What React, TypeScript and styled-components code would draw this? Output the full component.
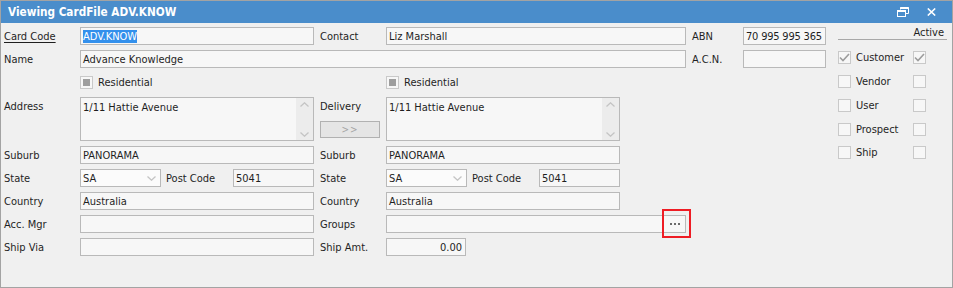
import React from 'react'
import styled, { createGlobalStyle } from 'styled-components'

const GlobalStyle = createGlobalStyle`
  html, body {
    margin: 0;
    padding: 0;
    background: #f0f0f0;
  }
  * {
    box-sizing: border-box;
  }
`

const Window = styled.div`
  width: 953px;
  height: 288px;
  border: 1px solid #a3a3a3;
  background: #f0f0f0;
  font-family: 'DejaVu Sans Condensed', 'Liberation Sans', Arial, sans-serif;
  font-size: 11px;
  color: #1f1f1f;
  overflow: hidden;
`

const TitleBar = styled.div`
  height: 22px;
  background: #4a8dcb;
  color: #ffffff;
  display: flex;
  align-items: center;
  padding: 0 6px 0 7px;
  font-weight: bold;
  font-size: 11.7px;
`

const TitleText = styled.div`
  flex: 1;
`

const TitleButton = styled.button`
  width: 29px;
  height: 22px;
  border: none;
  background: transparent;
  display: flex;
  align-items: center;
  justify-content: center;
  padding: 0;
`

const Body = styled.div`
  display: flex;
  padding: 4px 0 0 0;
`

const FormGrid = styled.div`
  display: grid;
  grid-template-columns: 79px 234px 72px 234px 66px 57px 83px;
  grid-template-rows: 18px 18px 19px 44px 18px 18px 18px 18px 18px;
  row-gap: 5px;
`

const Label = styled.div<{ $indent?: boolean; $top?: boolean; $underline?: boolean }>`
  display: flex;
  align-items: ${(p) => (p.$top ? 'flex-start' : 'center')};
  padding-left: ${(p) => (p.$indent ? '6px' : '3px')};
  padding-top: ${(p) => (p.$top ? '3px' : '0')};
  white-space: nowrap;
  text-decoration: ${(p) => (p.$underline ? 'underline' : 'none')};
  text-underline-offset: 2px;
`

const Input = styled.div<{ $span?: number; $align?: string; $width?: number; $tight?: boolean }>`
  grid-column: ${(p) => (p.$span ? `span ${p.$span}` : 'auto')};
  width: ${(p) => (p.$width ? `${p.$width}px` : 'auto')};
  height: 18px;
  border: 1px solid #b9b9b9;
  background: #f7f7f7;
  display: flex;
  align-items: center;
  justify-content: ${(p) => (p.$align === 'right' ? 'flex-end' : 'flex-start')};
  padding: 0 3px 0 2px;
  white-space: nowrap;
  letter-spacing: ${(p) => (p.$tight ? '-0.2px' : 'normal')};
  position: relative;
`

const Selected = styled.span`
  background: #3390ec;
  color: #ffffff;
`

const CheckRow = styled.div`
  display: flex;
  align-items: center;
  gap: 5px;
`

const Box = styled.div`
  width: 13px;
  height: 13px;
  border: 1px solid #c9c9c9;
  background: #f7f7f7;
  display: flex;
  align-items: center;
  justify-content: center;
  flex-shrink: 0;
`

const Indeterminate = styled.div`
  width: 7px;
  height: 7px;
  background: #9e9e9e;
`

const TextArea = styled.div`
  border: 1px solid #b9b9b9;
  background: #f7f7f7;
  display: flex;
`

const AreaText = styled.div`
  flex: 1;
  padding: 3px 2px;
`

const ScrollTrack = styled.div`
  width: 17px;
  background: #ececec;
  display: flex;
  flex-direction: column;
  justify-content: space-between;
  align-items: center;
  padding: 4px 0 3px;
`

const DeliveryCell = styled.div`
  display: flex;
  flex-direction: column;
  gap: 8px;
`

const CopyButton = styled.div`
  margin-left: 6px;
  width: 60px;
  height: 17px;
  border: 1px solid #b1b1b1;
  background: #e5e5e5;
  color: #a6a6a6;
  display: flex;
  align-items: center;
  justify-content: center;
  font-size: 10px;
  letter-spacing: 1px;
`

const SplitCell = styled.div`
  display: flex;
`

const Select = styled.div`
  width: 81px;
  height: 18px;
  border: 1px solid #b9b9b9;
  background: #fbfbfb;
  display: flex;
  align-items: center;
  padding-left: 2px;
`

const SelectValue = styled.div`
  flex: 1;
`

const SelectArrow = styled.div`
  width: 17px;
  display: flex;
  justify-content: center;
`

const PostLabel = styled(Label)`
  width: 72px;
  padding-left: 5px;
`

const DotsButton = styled.div`
  position: absolute;
  right: 1px;
  top: 1px;
  width: 19px;
  height: 14px;
  display: flex;
  align-items: center;
  justify-content: center;
  gap: 2px;
`

const Dot = styled.div`
  width: 2px;
  height: 2px;
  background: #6a6a6a;
`

const Highlight = styled.div`
  position: absolute;
  right: -6px;
  top: -7px;
  width: 29px;
  height: 29px;
  border: 2px solid #ee1c24;
`

const SidePanel = styled.div`
  margin-left: 12px;
  width: 109px;
  display: flex;
  flex-direction: column;
`

const ActiveHeader = styled.div`
  height: 13px;
  line-height: 11px;
  border-bottom: 1px solid #a8a8a8;
  text-align: right;
  padding-right: 3px;
`

const TypeList = styled.div`
  margin-top: 6px;
  display: flex;
  flex-direction: column;
`

const TypeRow = styled.div`
  height: 23.75px;
  display: flex;
  align-items: center;
`

const TypeName = styled.div`
  width: 62px;
  padding-left: 5px;
`

const Chevron = ({ up }: { up?: boolean }) => (
  <svg width="9" height="5" viewBox="0 0 9 5">
    <path
      d={up ? 'M0.5 4.5 L4.5 0.8 L8.5 4.5' : 'M0.5 0.5 L4.5 4.2 L8.5 0.5'}
      fill="none"
      stroke="#c4c4c4"
      strokeWidth="1.3"
    />
  </svg>
)

const Tick = () => (
  <svg width="11" height="9" viewBox="0 0 11 9">
    <path d="M1 4.5 L4 7.5 L10 1" fill="none" stroke="#9d9d9d" strokeWidth="1.6" />
  </svg>
)

const Check = ({ state }: { state?: 'on' | 'mixed' }) => (
  <Box>
    {state === 'on' && <Tick />}
    {state === 'mixed' && <Indeterminate />}
  </Box>
)

const RestoreIcon = () => (
  <svg width="12" height="10" viewBox="0 0 12 10">
    <path d="M3.5 2.5 V0.5 H11.5 V6.5 H8.5" fill="none" stroke="#ffffff" strokeWidth="1" />
    <path d="M3.5 1 H11.5" stroke="#ffffff" strokeWidth="2" />
    <rect x="0.5" y="3.5" width="8" height="6" fill="none" stroke="#ffffff" strokeWidth="1" />
    <path d="M0.5 4 H8.5" stroke="#ffffff" strokeWidth="2" />
  </svg>
)

const CloseIcon = () => (
  <svg width="9" height="8" viewBox="0 0 9 8">
    <path d="M0.8 0.5 L8.2 7.5 M8.2 0.5 L0.8 7.5" stroke="#ffffff" strokeWidth="1.6" />
  </svg>
)

const Address = () => (
  <TextArea>
    <AreaText>1/11 Hattie Avenue</AreaText>
    <ScrollTrack>
      <Chevron up />
      <Chevron />
    </ScrollTrack>
  </TextArea>
)

const StateField = ({ postCode }: { postCode: string }) => (
  <SplitCell>
    <Select>
      <SelectValue>SA</SelectValue>
      <SelectArrow>
        <Chevron />
      </SelectArrow>
    </Select>
    <PostLabel>Post Code</PostLabel>
    <Input $width={81}>{postCode}</Input>
  </SplitCell>
)

const TYPES = [
  { name: 'Customer', on: true },
  { name: 'Vendor', on: false },
  { name: 'User', on: false },
  { name: 'Prospect', on: false },
  { name: 'Ship', on: false },
]

export default function App() {
  return (
    <>
      <GlobalStyle />
      <Window>
        <TitleBar>
          <TitleText>Viewing CardFile ADV.KNOW</TitleText>
          <TitleButton>
            <RestoreIcon />
          </TitleButton>
          <TitleButton>
            <CloseIcon />
          </TitleButton>
        </TitleBar>
        <Body>
          <FormGrid>
            <Label $underline>Card Code</Label>
            <Input>
              <Selected>ADV.KNOW</Selected>
            </Input>
            <Label $indent>Contact</Label>
            <Input $span={2}>Liz Marshall</Input>
            <Label $indent>ABN</Label>
            <Input $tight>70 995 995 365</Input>

            <Label>Name</Label>
            <Input $span={4}>Advance Knowledge</Input>
            <Label $indent>A.C.N.</Label>
            <Input />

            <div />
            <CheckRow>
              <Check state="mixed" />
              Residential
            </CheckRow>
            <div />
            <CheckRow>
              <Check state="mixed" />
              Residential
            </CheckRow>
            <div />
            <div />
            <div />

            <Label $top>Address</Label>
            <Address />
            <DeliveryCell>
              <Label $indent $top>
                Delivery
              </Label>
              <CopyButton>&gt;&gt;</CopyButton>
            </DeliveryCell>
            <Address />
            <div />
            <div />
            <div />

            <Label>Suburb</Label>
            <Input>PANORAMA</Input>
            <Label $indent>Suburb</Label>
            <Input>PANORAMA</Input>
            <div />
            <div />
            <div />

            <Label>State</Label>
            <StateField postCode="5041" />
            <Label $indent>State</Label>
            <StateField postCode="5041" />
            <div />
            <div />
            <div />

            <Label>Country</Label>
            <Input>Australia</Input>
            <Label $indent>Country</Label>
            <Input>Australia</Input>
            <div />
            <div />
            <div />

            <Label>Acc. Mgr</Label>
            <Input />
            <Label $indent>Groups</Label>
            <Input $span={2}>
              <DotsButton>
                <Dot />
                <Dot />
                <Dot />
              </DotsButton>
              <Highlight />
            </Input>
            <div />
            <div />

            <Label>Ship Via</Label>
            <Input />
            <Label $indent>Ship Amt.</Label>
            <SplitCell>
              <Input $width={80} $align="right">
                0.00
              </Input>
            </SplitCell>
          </FormGrid>
          <SidePanel>
            <ActiveHeader>Active</ActiveHeader>
            <TypeList>
              {TYPES.map((t) => (
                <TypeRow key={t.name}>
                  <Check state={t.on ? 'on' : undefined} />
                  <TypeName>{t.name}</TypeName>
                  <Check state={t.on ? 'on' : undefined} />
                </TypeRow>
              ))}
            </TypeList>
          </SidePanel>
        </Body>
      </Window>
    </>
  )
}
